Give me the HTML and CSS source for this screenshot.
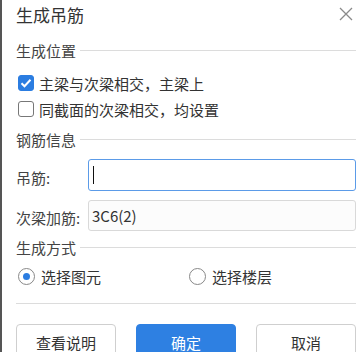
FILE: index.html
```html
<!DOCTYPE html>
<html lang="zh">
<head>
<meta charset="utf-8">
<link rel="stylesheet" href="styles.css">
</head>
<body>
<div class="dialog">
  <div class="header">
    <span class="title">生成吊筋</span>
    <svg class="close" width="14" height="14" viewBox="0 0 14 14"><path d="M1 1L13 13M13 1L1 13" stroke="#8a8a8a" stroke-width="1.3" fill="none"/></svg>
  </div>
  <div class="section s1"><span>生成位置</span><i class="rule"></i></div>
  <div class="check-row"><span class="cb checked"><svg width="12" height="10" viewBox="0 0 12 10"><path d="M1.5 5.2L4.5 8.2L10.5 1.8" stroke="#fff" stroke-width="2" fill="none"/></svg></span><span>主梁与次梁相交，主梁上</span></div>
  <div class="check-row"><span class="cb"></span><span>同截面的次梁相交，均设置</span></div>
  <div class="section s2"><span>钢筋信息</span><i class="rule"></i></div>
  <div class="field f1"><span class="label">吊筋:</span><div class="input focus"><span class="caret"></span></div></div>
  <div class="field f2"><span class="label">次梁加筋:</span><div class="input">3C6(2)</div></div>
  <div class="section s3"><span>生成方式</span><i class="rule"></i></div>
  <div class="radio-row">
    <div class="radio-item"><span class="rd on"></span><span>选择图元</span></div>
    <div class="radio-item r2"><span class="rd"></span><span>选择楼层</span></div>
  </div>
  <div class="divider"></div>
  <div class="buttons">
    <button class="btn">查看说明</button>
    <button class="btn primary">确定</button>
    <button class="btn">取消</button>
  </div>
</div>
</body>
</html>
```
FILE: styles.css
```css
html, body {
  margin: 0;
  padding: 0;
  background: #fff;
  overflow: hidden;
}
.dialog {
  width: 360px;
  height: 352px;
  box-sizing: border-box;
  border-left: 2px solid #555;
  padding: 0 4px 0 14px;
  font-family: "Noto Sans CJK SC", "Microsoft YaHei", sans-serif;
  font-size: 15px;
  color: #333;
  display: flex;
  flex-direction: column;
  overflow: hidden;
}
.dialog > * {
  flex-shrink: 0;
}
.header {
  height: 34px;
  display: flex;
  align-items: flex-start;
  justify-content: space-between;
  padding-top: 4px;
  box-sizing: border-box;
}
.title {
  font-size: 17px;
  line-height: 22px;
  color: #333;
}
.close {
  margin-top: 3px;
  margin-right: 3px;
}
.section {
  display: flex;
  align-items: center;
  height: 22px;
  line-height: 22px;
  color: #444;
}
.section .rule {
  flex: 1;
  height: 1px;
  background: #dcdcdc;
  margin-left: 4px;
  margin-top: -1px;
}
.s1 { margin-top: 6px; }
.s2 { margin-top: 7px; }
.s3 { margin-top: 6px; }
.check-row {
  height: 26px;
  display: flex;
  align-items: center;
  gap: 5px;
}
.s1 + .check-row { margin-top: 8px; }
.cb {
  width: 16px;
  height: 16px;
  box-sizing: border-box;
  border: 1px solid #777;
  border-radius: 3px;
  margin-left: 2px;
  display: flex;
  align-items: center;
  justify-content: center;
  background: #fff;
}
.cb.checked {
  background: #2b7de1;
  border-color: #2b7de1;
}
.field {
  display: flex;
  align-items: center;
  height: 32px;
}
.f1 { margin-top: 8px; }
.f2 { margin-top: 9px; height: 31px; }
.label {
  width: 72px;
  color: #444;
  padding-top: 4px;
}
.input {
  flex: 1;
  height: 100%;
  box-sizing: border-box;
  border: 1px solid #d9d9d9;
  border-radius: 3px;
  background: #fcfcfc;
  display: flex;
  align-items: center;
  padding-left: 3px;
  font-size: 15px;
  color: #333;
}
.input.focus {
  border: 1.5px solid #5b9be8;
  background: #fff;
}
.caret {
  width: 1px;
  height: 18px;
  background: #111;
  margin-left: 1px;
}
.radio-row {
  display: flex;
  height: 26px;
  align-items: center;
  margin-top: 4px;
}
.radio-item {
  display: flex;
  align-items: center;
  gap: 6px;
}
.r2 { margin-left: 86px; }
.rd {
  width: 17px;
  height: 17px;
  box-sizing: border-box;
  border: 1px solid #888;
  border-radius: 50%;
  margin-left: 2px;
  display: flex;
  align-items: center;
  justify-content: center;
  background: #fff;
}
.rd.on::after {
  content: "";
  width: 7px;
  height: 7px;
  border-radius: 50%;
  background: #2b7de1;
}
.divider {
  height: 1px;
  background: #dcdcdc;
  margin-top: 14px;
}
.buttons {
  display: flex;
  justify-content: space-between;
  margin-top: 20px;
}
.btn {
  width: 100px;
  height: 36px;
  font-family: inherit;
  font-size: 15px;
  color: #333;
  background: #fff;
  border: 1px solid #cfcfcf;
  border-radius: 4px;
  padding: 0;
}
.btn.primary {
  background: #2e80e2;
  border-color: #2e80e2;
  color: #fff;
}
```
